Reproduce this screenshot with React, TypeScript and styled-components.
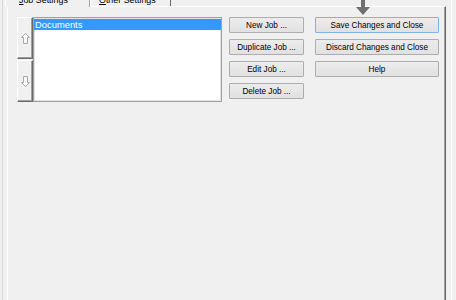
import React from "react";
import styled, { createGlobalStyle } from "styled-components";

const Global = createGlobalStyle`
  html, body { margin: 0; padding: 0; background: #f0f0f0; }
  body { font-family: "Liberation Sans", Arial, sans-serif; color: #000; }
  * { box-sizing: border-box; }
`;

const Frame = styled.div`
  position: relative;
  width: 456px;
  height: 300px;
  overflow: hidden;
  background: #f0f0f0;
  padding: 0 4px 0 2px;
  display: flex;
`;

const OuterEdge = styled.div`
  flex: 1;
  display: flex;
  border-left: 1px solid #dadada;
  border-right: 1px solid #ffffff;
  padding: 0 5px 0 4px;
`;

const TabControl = styled.div`
  width: 439px;
  flex: none;
  display: flex;
  flex-direction: column;
`;

const TabStrip = styled.div`
  display: flex;
  align-items: flex-end;
  height: 6px;
  overflow: visible;
`;

const Tab = styled.div<{ $selected?: boolean }>`
  position: relative;
  z-index: ${(p) => (p.$selected ? 2 : 1)};
  flex: none;
  height: ${(p) => (p.$selected ? 21 : 20)}px;
  margin-bottom: ${(p) => (p.$selected ? -1 : 0)}px;
  margin-left: ${(p) => (p.$selected ? -2 : 0)}px;
  width: ${(p) => (p.$selected ? 85 : 81)}px;
  padding-left: ${(p) => (p.$selected ? 13 : 8)}px;
  padding-top: 9px;
  background: #f0f0f0;
  border-left: 1px solid #ffffff;
  border-right: 1px solid ${(p) => (p.$selected ? "#a0a0a0" : "#696969")};
  font-size: 8.9px;
  line-height: 10px;
  white-space: nowrap;
  color: #000;
`;

const Accel = styled.span`
  text-decoration: underline;
`;

const Panel = styled.div`
  flex: 1;
  border-top: 1px solid #ffffff;
  border-left: 1px solid #ffffff;
  border-right: 1px solid #696969;
  box-shadow: inset -1px 0 0 #a0a0a0;
  padding: 10px 0 0 9px;
`;

const ContentRow = styled.div`
  display: flex;
  align-items: flex-start;
`;

const ArrowColumn = styled.div`
  flex: none;
  display: flex;
  flex-direction: column;
  gap: 1px;
  width: 16px;
`;

const ArrowButton = styled.div`
  height: 42px;
  display: flex;
  align-items: center;
  justify-content: center;
  background: #f0f0f0;
  border-top: 1px solid #ffffff;
  border-left: 1px solid #ffffff;
  border-right: 1px solid #696969;
  border-bottom: 1px solid #696969;
  box-shadow: inset -1px -1px 0 #a0a0a0;
`;

const ListBox = styled.div`
  flex: none;
  width: 189px;
  height: 85px;
  background: #ffffff;
  border: 1px solid #a0a0a0;
  box-shadow: inset 0 0 0 1px #e3e3e3;
  padding: 1px 0 0 0;
  margin-right: 7px;
`;

const ListItem = styled.div<{ $selected?: boolean }>`
  height: 11px;
  line-height: 11px;
  padding-left: 1px;
  font-size: 9.4px;
  background: ${(p) => (p.$selected ? "#3399ff" : "transparent")};
  color: ${(p) => (p.$selected ? "#ffffff" : "#000")};
  white-space: nowrap;
`;

const ButtonColumn = styled.div<{ $width: number; $gapAfter: number }>`
  flex: none;
  display: flex;
  flex-direction: column;
  gap: 6px;
  width: ${(p) => p.$width}px;
  margin-right: ${(p) => p.$gapAfter}px;
`;

const Button = styled.div<{ $default?: boolean }>`
  height: 16px;
  display: flex;
  align-items: center;
  justify-content: center;
  font-size: 8.2px;
  color: #000;
  white-space: nowrap;
  background: linear-gradient(#ececec, #e1e1e1);
  border: 1px solid ${(p) => (p.$default ? "#7eb4ea" : "#adadad")};
  border-radius: 1px;
`;

const Pointer = styled.svg`
  position: absolute;
  left: 356px;
  top: 0;
`;

const UpArrow = () => (
  <svg width="9" height="11" viewBox="0 0 9 11">
    <path d="M4.5 0.5 L8.5 4.5 L6.5 4.5 L6.5 10.5 L2.5 10.5 L2.5 4.5 L0.5 4.5 Z" fill="#f8f8f8" stroke="#a8a8a8" strokeWidth="1" />
  </svg>
);

const DownArrow = () => (
  <svg width="9" height="11" viewBox="0 0 9 11">
    <path d="M4.5 10.5 L8.5 6.5 L6.5 6.5 L6.5 0.5 L2.5 0.5 L2.5 6.5 L0.5 6.5 Z" fill="#f8f8f8" stroke="#a8a8a8" strokeWidth="1" />
  </svg>
);

export default function App() {
  return (
    <>
      <Global />
      <Frame>
        <OuterEdge>
          <TabControl>
            <TabStrip>
              <Tab $selected>
                <Accel>J</Accel>ob Settings
              </Tab>
              <Tab>
                <Accel>O</Accel>ther Settings
              </Tab>
            </TabStrip>
            <Panel>
              <ContentRow>
                <ArrowColumn>
                  <ArrowButton>
                    <UpArrow />
                  </ArrowButton>
                  <ArrowButton>
                    <DownArrow />
                  </ArrowButton>
                </ArrowColumn>
                <ListBox>
                  <ListItem $selected>Documents</ListItem>
                </ListBox>
                <ButtonColumn $width={75} $gapAfter={11}>
                  <Button>New Job ...</Button>
                  <Button>Duplicate Job ...</Button>
                  <Button>Edit Job ...</Button>
                  <Button>Delete Job ...</Button>
                </ButtonColumn>
                <ButtonColumn $width={124} $gapAfter={0}>
                  <Button $default>Save Changes and Close</Button>
                  <Button>Discard Changes and Close</Button>
                  <Button>Help</Button>
                </ButtonColumn>
              </ContentRow>
            </Panel>
          </TabControl>
        </OuterEdge>
        <Pointer width="14" height="15" viewBox="0 0 14 15">
          <polygon points="5,0 9,0 9,7 14,7 7,15 0,7 5,7" fill="#6f6f6f" />
        </Pointer>
      </Frame>
    </>
  );
}
